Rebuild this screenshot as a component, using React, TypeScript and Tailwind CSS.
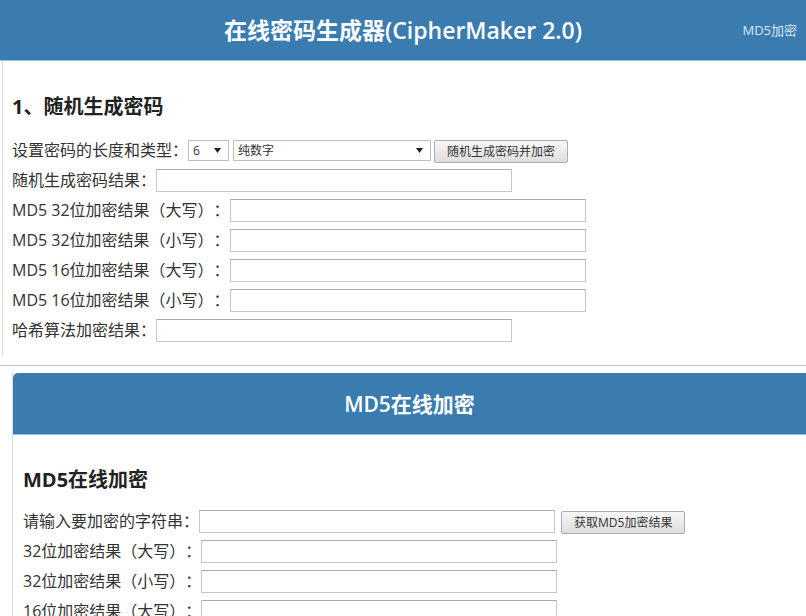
function Arrow() {
  return (
    <svg width="7" height="5" viewBox="0 0 7 5" className="shrink-0">
      <path d="M0 0h7L3.5 5z" fill="#222" />
    </svg>
  );
}

function FakeSelect({ value, width }: { value: string; width: string }) {
  return (
    <div
      className={`${width} flex h-[21px] items-center justify-between border border-[#bdbdbd] bg-white pl-[4px] pr-[7px] text-[12px] leading-[19px] text-[#333]`}
    >
      <span>{value}</span>
      <Arrow />
    </div>
  );
}

function Field({ width = "w-[356px]" }: { width?: string }) {
  return <input className={`${width} h-[23px] border border-[#c6c6c6] border-t-[#ababab] bg-white outline-none`} />;
}

function Btn({ children }: { children: string }) {
  return (
    <button className="h-[23px] rounded-[2px] border border-[#adadad] bg-gradient-to-b from-[#f7f7f7] to-[#dedede] px-[12px] text-[12px] leading-[21px] text-[#333] whitespace-nowrap">
      {children}
    </button>
  );
}

function Row({ label, children }: { label: string; children: React.ReactNode }) {
  return (
    <div className="flex h-[30px] items-center">
      <span className="whitespace-nowrap text-[16px] leading-[30px] text-[#333]">{label}</span>
      {children}
    </div>
  );
}

export default function App() {
  return (
    <div className="h-[616px] w-[806px] overflow-hidden bg-white font-['Open_Sans','Noto_Sans_CJK_SC',sans-serif] [text-spacing-trim:space-all]">
      {/* top bar */}
      <header className="grid h-[61px] grid-cols-[1fr_auto_1fr] items-center border-b border-[#9dc2de] bg-[#3a7cb0]">
        <div />
        <h1 className="text-[23px] font-semibold leading-[30px] text-white">在线密码生成器(CipherMaker 2.0)</h1>
        <div className="pr-[9px] text-right text-[13px] leading-[20px] text-[#dbe7f1]">MD5加密</div>
      </header>

      {/* section 1 */}
      <section className="ml-[2px] border-l border-[#dcdcdc] pb-[11px] pl-[9px] pt-[34px]">
        <h2 className="mb-[16px] text-[20px] font-bold leading-[24px] text-[#222]">1、随机生成密码</h2>
        <Row label="设置密码的长度和类型：">
          <FakeSelect value="6" width="w-[41px]" />
          <div className="ml-[4px]">
            <FakeSelect value="纯数字" width="w-[198px]" />
          </div>
          <div className="ml-[3px]">
            <Btn>随机生成密码并加密</Btn>
          </div>
        </Row>
        <Row label="随机生成密码结果：">
          <Field />
        </Row>
        <Row label="MD5 32位加密结果（大写）：">
          <Field />
        </Row>
        <Row label="MD5 32位加密结果（小写）：">
          <Field />
        </Row>
        <Row label="MD5 16位加密结果（大写）：">
          <Field />
        </Row>
        <Row label="MD5 16位加密结果（小写）：">
          <Field />
        </Row>
        <Row label="哈希算法加密结果：">
          <Field />
        </Row>
      </section>

      <hr className="mt-[9px] border-0 border-t border-[#c4c4c4]" />

      {/* section 2 */}
      <section className="ml-[12px] mt-[7px] border-l border-[#dcdcdc]">
        <div className="flex h-[62px] items-center justify-center rounded-tl-[5px] border-b border-[#9dc2de] bg-[#3a7cb0]">
          <h2 className="text-[21px] font-semibold leading-[30px] text-white">MD5在线加密</h2>
        </div>
        <div className="pl-[10px] pt-[33px]">
          <h3 className="mb-[14px] text-[20px] font-bold leading-[24px] text-[#222]">MD5在线加密</h3>
          <Row label="请输入要加密的字符串：">
            <Field />
            <div className="ml-[6px]">
              <Btn>获取MD5加密结果</Btn>
            </div>
          </Row>
          <Row label="32位加密结果（大写）：">
            <Field />
          </Row>
          <Row label="32位加密结果（小写）：">
            <Field />
          </Row>
          <Row label="16位加密结果（大写）：">
            <Field />
          </Row>
        </div>
      </section>
    </div>
  );
}
